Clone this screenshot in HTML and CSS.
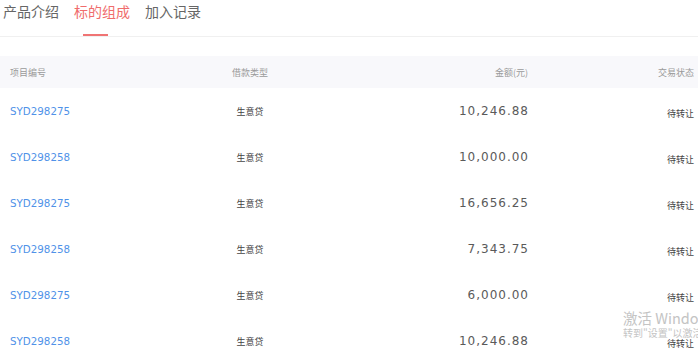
FILE: index.html
```html
<!DOCTYPE html>
<html lang="zh">
<head>
<meta charset="utf-8">
<link rel="stylesheet" href="styles.css">
</head>
<body>
<div class="tabs">
  <div class="tab">产品介绍</div>
  <div class="tab active">标的组成</div>
  <div class="tab">加入记录</div>
</div>
<div class="table">
  <div class="row head">
    <div class="c1">项目编号</div>
    <div class="c2">借款类型</div>
    <div class="c3">金额(元)</div>
    <div class="c4">交易状态</div>
  </div>
  <div class="row">
    <div class="c1 id">SYD298275</div>
    <div class="c2">生意贷</div>
    <div class="c3 num">10,246.88</div>
    <div class="c4 st">待转让</div>
  </div>
  <div class="row">
    <div class="c1 id">SYD298258</div>
    <div class="c2">生意贷</div>
    <div class="c3 num">10,000.00</div>
    <div class="c4 st">待转让</div>
  </div>
  <div class="row">
    <div class="c1 id">SYD298275</div>
    <div class="c2">生意贷</div>
    <div class="c3 num">16,656.25</div>
    <div class="c4 st">待转让</div>
  </div>
  <div class="row">
    <div class="c1 id">SYD298258</div>
    <div class="c2">生意贷</div>
    <div class="c3 num">7,343.75</div>
    <div class="c4 st">待转让</div>
  </div>
  <div class="row">
    <div class="c1 id">SYD298275</div>
    <div class="c2">生意贷</div>
    <div class="c3 num">6,000.00</div>
    <div class="c4 st">待转让</div>
  </div>
  <div class="row">
    <div class="c1 id">SYD298258</div>
    <div class="c2">生意贷</div>
    <div class="c3 num">10,246.88</div>
    <div class="c4 st">待转让</div>
  </div>
</div>
<div class="watermark">
  <div class="wm1">激活 Window</div>
  <div class="wm2">转到"设置"以激活</div>
</div>
</body>
</html>
```
FILE: styles.css
```css
html, body {
  margin: 0;
  padding: 0;
  background: #fff;
  overflow: hidden;
}
body {
  font-family: "Noto Sans CJK SC", "Noto Sans", sans-serif;
  width: 698px;
  height: 352px;
  position: relative;
}
.tabs {
  display: flex;
  gap: 25px;
  height: 37px;
  border-bottom: 1px solid #f0f0f0;
  padding-left: 3px;
  box-sizing: border-box;
}
.tab {
  font-size: 14px;
  line-height: 22px;
  color: #666;
  position: relative;
  width: 46px;
  white-space: nowrap;
}
.tab.active {
  color: #f06c6c;
}
.tab.active::after {
  content: "";
  position: absolute;
  left: 9px;
  width: 25px;
  top: 34px;
  height: 2px;
  background: #f07474;
}
.table {
  margin-top: 19px;
}
.row {
  display: grid;
  grid-template-columns: 180px 120px 218px 1fr;
  padding: 0 4px 0 10px;
  height: 46px;
  align-items: center;
  font-size: 9px;
  color: #444;
}
.row.head {
  height: 32px;
  background: #f8f8fb;
  color: #9a9a9a;
  font-size: 9px;
}
.c2 { text-align: center; }
.c3 { text-align: right; }
.c4 { text-align: right; }
.id {
  font-family: "DejaVu Sans", sans-serif;
  color: #5092e8;
  font-size: 10.3px;
}
.num {
  font-family: "DejaVu Sans", sans-serif;
  font-size: 12px;
  letter-spacing: 1px;
  margin-right: -1px;
  color: #5a5a5a;
}
.st {
  padding-top: 4px;
}
.watermark {
  position: absolute;
  left: 623px;
  top: 309px;
  white-space: nowrap;
  color: #c4c4c4;
}
.wm1 {
  font-size: 14.5px;
  line-height: 18px;
}
.wm2 {
  font-size: 10px;
  line-height: 12px;
}
```
